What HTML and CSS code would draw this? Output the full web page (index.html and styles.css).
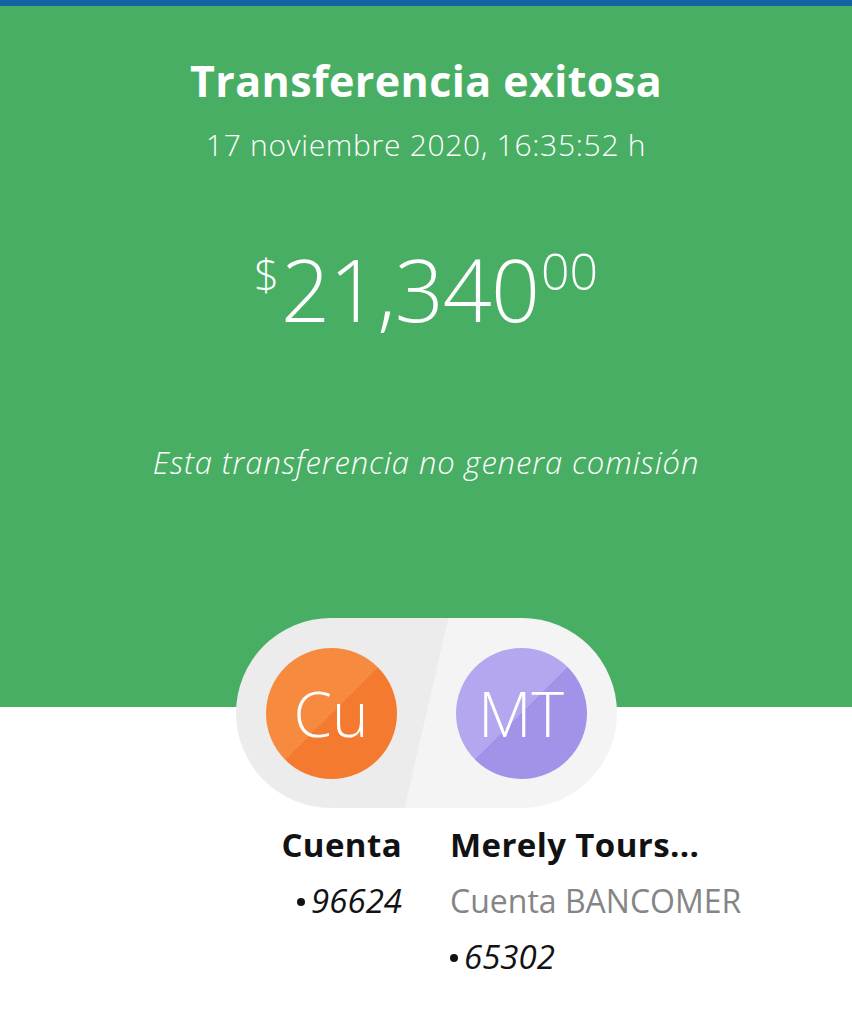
FILE: index.html
```html
<!DOCTYPE html>
<html lang="es">
<head>
    <meta charset="UTF-8">
    <meta name="viewport" content="width=device-width, initial-scale=1.0">
    <title>Transferencia exitosa</title>
    <link rel="stylesheet" href="styles.css">
</head>
<body>
    <div class="top-bar"></div>

    <header class="summary">
        <h1 class="title">Transferencia exitosa</h1>
        <p class="date">17 noviembre 2020, 16:35:52 h</p>

        <div class="amount">
            <span class="currency">$</span><span class="integer">21,340</span><span class="cents">00</span>
        </div>

        <p class="fee-note">Esta transferencia no genera comisión</p>
    </header>

    <div class="parties">
        <div class="avatar avatar-origin">Cu</div>
        <div class="avatar avatar-dest">MT</div>
    </div>

    <div class="accounts">
        <div class="account account-origin">
            <div class="account-name">Cuenta</div>
            <div class="account-number"><span class="dot"></span>96624</div>
        </div>
        <div class="account account-dest">
            <div class="account-name">Merely Tours...</div>
            <div class="account-bank">Cuenta BANCOMER</div>
            <div class="account-number"><span class="dot"></span>65302</div>
        </div>
    </div>
</body>
</html>
```

FILE: styles.css
```css
body {
    margin: 0;
    font-family: "Open Sans", Lato, sans-serif;
    background-color: #ffffff;
    color: #121212;
}
.top-bar {
    height: 6px;
    background-color: #1464a5;
}
.summary {
    background-color: #48ae64;
    color: #ffffff;
    text-align: center;
    height: 701px;
    padding-top: 49px;
    box-sizing: border-box;
}
.title {
    margin: 0;
    font-size: 43px;
    font-weight: 700;
    line-height: 52px;
    letter-spacing: 0.4px;
}
.date {
    margin: 20px 0 0;
    font-size: 30px;
    font-weight: 300;
    line-height: 36px;
    letter-spacing: 0.7px;
}
.amount {
    margin-top: 83px;
    display: flex;
    justify-content: center;
    align-items: flex-start;
    font-weight: 300;
    line-height: 1;
}
.currency {
    font-size: 44px;
    margin-top: 6px;
    margin-right: 2px;
}
.integer {
    font-size: 86px;
    letter-spacing: -1px;
}
.cents {
    font-size: 50px;
    margin-left: 2px;
}
.fee-note {
    margin: 110px 0 0;
    font-size: 31px;
    font-style: italic;
    font-weight: 300;
    line-height: 40px;
    letter-spacing: 0.9px;
}
.parties {
    width: 381px;
    height: 190px;
    margin: -89px auto 0;
    box-sizing: border-box;
    padding: 0 30px;
    border-radius: 95px;
    background: linear-gradient(103deg, #ececec 50%, #f4f4f4 50%);
    display: flex;
    align-items: center;
    justify-content: space-between;
}
.avatar {
    width: 131px;
    height: 131px;
    border-radius: 50%;
    color: #ffffff;
    font-size: 62px;
    font-weight: 300;
    display: flex;
    align-items: center;
    justify-content: center;
}
.avatar-origin {
    background: linear-gradient(135deg, #f68b3f 50%, #f37a2f 50%);
}
.avatar-dest {
    background: linear-gradient(135deg, #b4a7ef 50%, #a393e8 50%);
}
.accounts {
    display: grid;
    grid-template-columns: 1fr 1fr;
    column-gap: 48px;
    margin-top: 9px;
    font-size: 33px;
    line-height: 56px;
}
.account-origin {
    text-align: right;
}
.account-name {
    font-weight: 700;
    letter-spacing: 0.4px;
}
.account-bank {
    color: #858585;
    font-weight: 400;
    font-size: 32px;
}
.account-number {
    font-style: italic;
}
.dot {
    display: inline-block;
    width: 8px;
    height: 8px;
    border-radius: 50%;
    background-color: #121212;
    vertical-align: middle;
    margin: 0 6px 4px 0;
}
```
